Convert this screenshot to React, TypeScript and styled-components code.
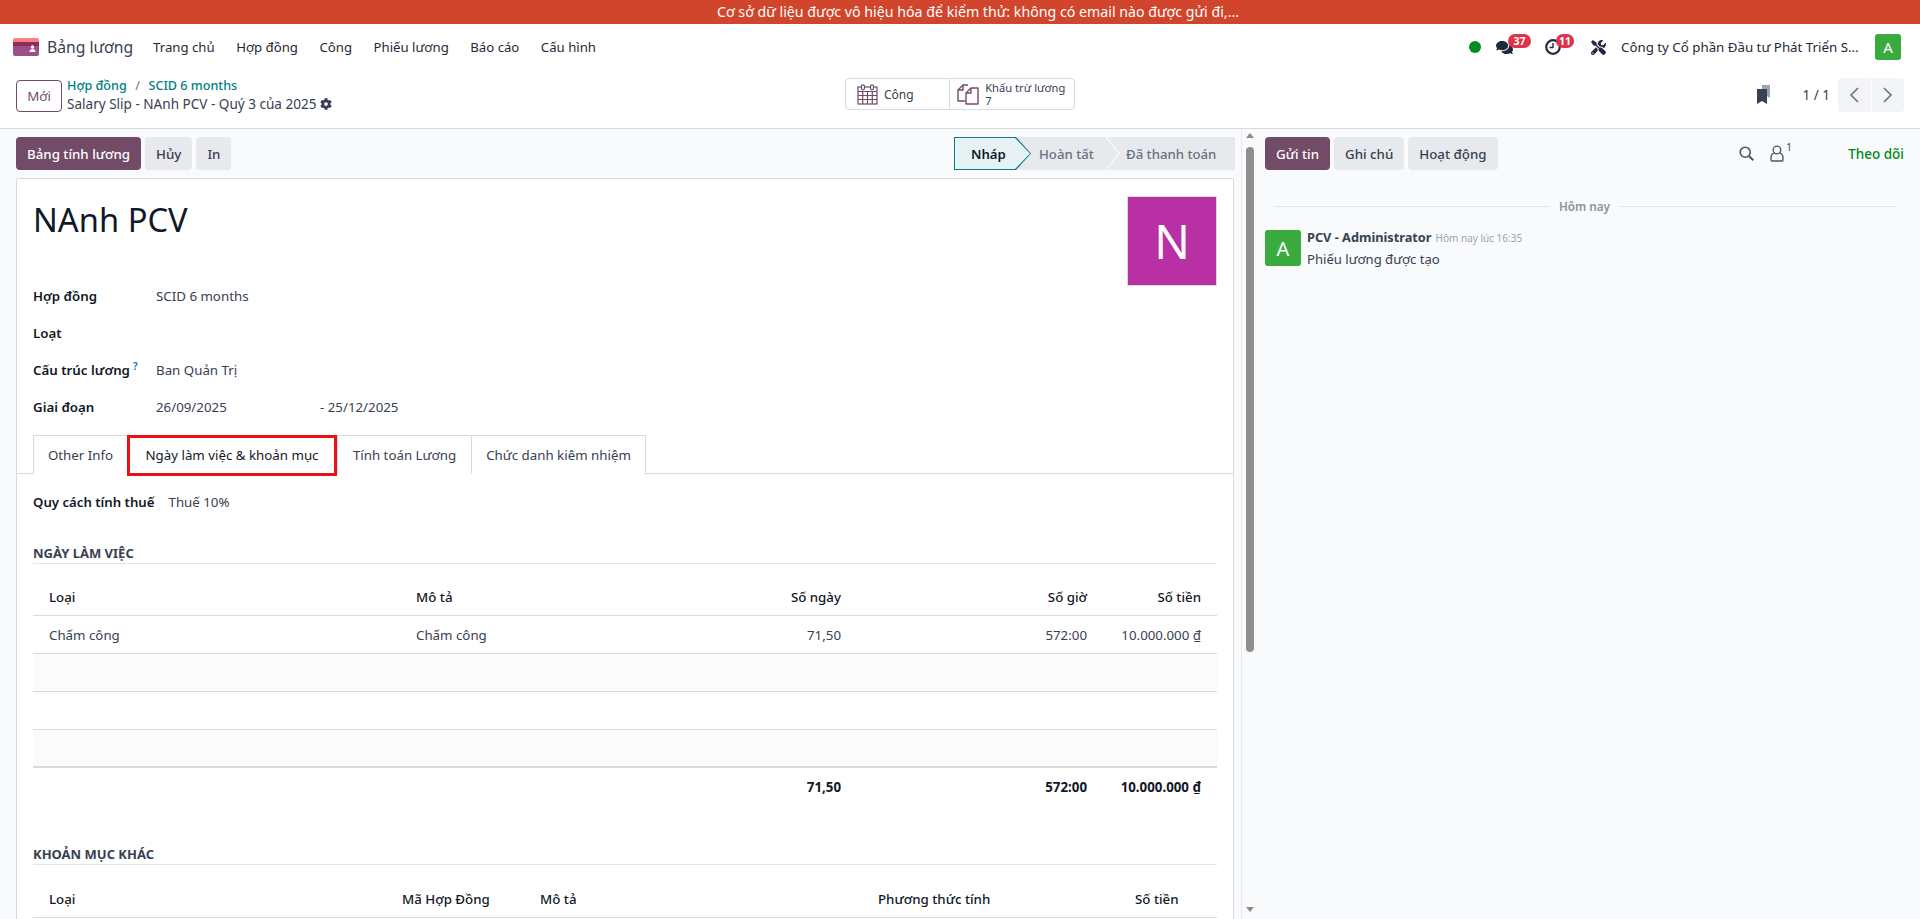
import React from "react";
import styled, { createGlobalStyle } from "styled-components";
import { FaComments, FaTools, FaCog } from "react-icons/fa";

const Global = createGlobalStyle`
  html, body { margin: 0; padding: 0; height: 100%; overflow: hidden; background: #fff; }
  body { font-family: "Noto Sans", "Open Sans", sans-serif; font-size: 13.3px; color: #374151; }
  * { box-sizing: border-box; }
`;

const Page = styled.div`
  width: 1920px; height: 919px; display: flex; flex-direction: column; overflow: hidden;
`;
const Banner = styled.div`
  height: 24px; flex: none; background: #d0452b; color: #fff; font-size: 14.2px; line-height: 24px; text-align: center; padding-left: 36px;
`;
const Navbar = styled.header`
  height: 46px; flex: none; display: flex; align-items: center; padding: 0 19px 0 13px; background: #fff;
`;
const Brand = styled.div`
  display: flex; align-items: center; gap: 8px; font-size: 15.7px; color: #374151; margin-right: 20px;
`;
const Menu = styled.nav`
  display: flex; gap: 21.5px; font-size: 13.2px; color: #1f2937;
`;
const Systray = styled.div`
  margin-left: auto; display: flex; align-items: center; color: #1f2937;
`;
const Dot = styled.span`
  width: 12px; height: 12px; border-radius: 50%; background: #008f1f; margin-right: 15px;
`;
const TrayIcon = styled.span<{ $gap: number }>`
  position: relative; display: flex; margin-right: ${(p) => p.$gap}px; color: #1f2a3c;
`;
const Badge = styled.span<{ $left: number; $w: number }>`
  position: absolute; left: ${(p) => p.$left}px; top: -5px; height: 14px; width: ${(p) => p.$w}px; border-radius: 7px;
  background: #e0334a; color: #fff; font-size: 10.5px; font-weight: 700; line-height: 14px; text-align: center;
`;
const Company = styled.span`
  width: 234px; white-space: nowrap; margin-right: 20px; font-size: 13.3px;
`;
const UserBox = styled.span`
  width: 26px; height: 26px; border-radius: 3px; background: #3aac3f; color: #fff; display: flex; align-items: center; justify-content: center; font-size: 15px;
`;

const ControlPanel = styled.div`
  height: 59px; flex: none; position: relative; display: grid; grid-template-columns: 829px 230px 1fr; padding: 8px 16px 0;
  border-bottom: 1px solid #d8dadd; background: #fff; align-items: start;
`;
const Left = styled.div`
  display: flex; gap: 5px; align-items: center;
`;
const NewButton = styled.button`
  width: 46px; height: 32px; border: 1px solid #714b67; border-radius: 4px; background: #fff; color: #714b67; font: inherit; font-size: 13.3px; padding: 0;
`;
const Crumbs = styled.div`
  display: flex; flex-direction: column; margin-top: -1px;
`;
const CrumbLine = styled.div`
  display: flex; gap: 8.5px; color: #017e84; font-weight: 500; font-size: 12.6px; line-height: 18px;
`;
const CrumbSep = styled.span`
  color: #6b7280; font-weight: 400;
`;
const Title = styled.div`
  display: flex; align-items: center; gap: 4px; color: #374151; line-height: 18px; font-size: 13.55px;
`;
const StatGroup = styled.div`
  height: 32px; display: flex; border: 1px solid #d8dadd; border-radius: 4px; background: #fff;
`;
const Stat = styled.div<{ $w: number }>`
  width: ${(p) => p.$w}px; display: flex; align-items: center; gap: 6px; padding-left: 11px; font-size: 12px; color: #374151;
  & + & { border-left: 1px solid #d8dadd; padding-left: 7px; }
`;
const StatText = styled.div`
  display: flex; flex-direction: column; line-height: 13px; font-size: 11.2px;
`;
const Pager = styled.div`
  display: flex; align-items: center; justify-content: flex-end; height: 34px;
`;
const PagerCount = styled.span`
  font-size: 13.5px; margin: 0 8px 0 32px; color: #374151;
`;
const PagerBtn = styled.button`
  width: 32.5px; height: 34px; border: 0; background: #f3f4f6; padding: 0; display: flex; align-items: center; justify-content: center; color: #6b7280;
  &:first-of-type { border-radius: 4px 0 0 4px; margin-right: 1px; }
  &:last-of-type { border-radius: 0 4px 4px 0; }
`;

const Main = styled.div`
  flex: 1; min-height: 0; display: flex; background: #f9fafb; overflow: hidden;
`;
const FormPane = styled.section`
  width: 1241px; flex: none; padding: 8px 7px 0 16px; overflow: hidden;
`;
const StatusRow = styled.div`
  display: flex; align-items: center; height: 33px; margin-bottom: 8px;
`;
const Btn = styled.button<{ $primary?: boolean }>`
  height: 33px; border: 0; border-radius: 4px; padding: 0 11px; margin-right: 4px; font: inherit; font-size: 13.3px; font-weight: 500;
  background: ${(p) => (p.$primary ? "#714b67" : "#e7e9ed")}; color: ${(p) => (p.$primary ? "#fff" : "#374151")};
`;
const StatusBar = styled.div`
  margin-left: auto; display: flex; height: 33px; background: #e7e9ed; width: 281px; margin-right: -1px; font-size: 13.2px; font-weight: 500; color: #6b7280;
`;
const StepCurrent = styled.div`
  position: relative; width: 77px; margin-right: -6px; background: #017e84; color: #111827; display: flex; align-items: center; padding-left: 17px; font-weight: 600;
  clip-path: polygon(0 0, calc(100% - 15px) 0, 100% 50%, calc(100% - 15px) 100%, 0 100%);
  &::before {
    content: ""; position: absolute; inset: 1px 1px 1px 1px; background: #e6f2f3;
    clip-path: polygon(0 0, calc(100% - 15px) 0, 100% 50%, calc(100% - 15px) 100%, 0 100%);
  }
  span { position: relative; }
`;
const Step = styled.div<{ $w: number; $pad: number }>`
  position: relative; width: ${(p) => p.$w}px; display: flex; align-items: center; padding-left: ${(p) => p.$pad}px;
  &::after {
    content: ""; position: absolute; right: -15px; top: 0; width: 15px; height: 33px; background: #f9fafb;
    clip-path: polygon(0 0, 1.5px 0, 100% 50%, 1.5px 100%, 0 100%, calc(100% - 1.5px) 50%);
  }
`;
const StepLast = styled.div`
  padding-left: 21px; display: flex; align-items: center;
`;
const Sheet = styled.div`
  background: #fff; border: 1px solid #d8dadd; border-bottom: 0; border-radius: 2px 2px 0 0; height: 900px;
`;
const SheetHead = styled.div`
  height: 98px; display: flex; justify-content: space-between; align-items: flex-start; padding: 17px 16px 0;
`;
const Name = styled.h1`
  margin: 0; font-size: 32.7px; font-weight: 400; line-height: 48px; color: #111827;
`;
const Avatar = styled.div`
  width: 90px; height: 90px; background: #b92fa4; border: 1px solid #d8dadd; color: #fff; display: flex; align-items: center; justify-content: center; font-size: 47px;
`;
const Fields = styled.div`
  padding: 0 16px; height: 157px;
`;
const Field = styled.div`
  height: 37px; display: flex; align-items: center;
`;
const Label = styled.label`
  width: 123px; flex: none; font-weight: 600; color: #111827; font-size: 13.3px;
`;
const Help = styled.sup`
  color: #0180a5; font-size: 10px; margin-left: 3px; font-weight: 600;
`;
const Value = styled.span<{ $w?: number }>`
  font-size: 13.3px; color: #374151; ${(p) => (p.$w ? `width: ${p.$w}px;` : "")}
`;
const TabBar = styled.div`
  height: 39px; margin-top: 1px; padding-left: 16px; display: flex; border-bottom: 1px solid #d8dadd;
`;
const Tab = styled.div<{ $w: number; $active?: boolean }>`
  position: relative; width: ${(p) => p.$w}px; height: 39px; display: flex; align-items: center; justify-content: center; font-size: 13.3px;
  border: 1px solid #d8dadd; border-left-width: ${(p) => (p.$active ? 0 : 1)}px; border-bottom: 0; margin-right: -1px;
  color: ${(p) => (p.$active ? "#111827" : "#374151")};
  background: #fff;
  ${(p) => (p.$active ? `&::after { content: ""; position: absolute; left: 0; right: 0; top: -1px; bottom: -2px; border: 3px solid #ee0f16; }` : "")}
`;
const TabBody = styled.div`
  padding: 16px 16px 0;
`;
const TaxRow = styled.div`
  display: flex; height: 24px; align-items: center; gap: 14px;
`;
const TaxLabel = styled.span`
  font-weight: 600; color: #111827; font-size: 13.2px;
`;
const SectionTitle = styled.div<{ $mt: number }>`
  margin-top: ${(p) => p.$mt}px; height: 20px; line-height: 19px; border-bottom: 1px solid #e3e5e8; font-size: 13px; font-weight: 700; color: #374151; text-transform: uppercase;
`;
const Table = styled.table<{ $mt: number }>`
  width: 1184px; margin-top: ${(p) => p.$mt}px; border-collapse: collapse; table-layout: fixed; font-size: 13.3px;
`;
const Col = styled.col<{ $w: number }>`
  width: ${(p) => p.$w}px;
`;
const Th = styled.th<{ $right?: boolean }>`
  height: 36px; padding: 0 16px; font-weight: 500; color: #111827; text-align: ${(p) => (p.$right ? "right" : "left")}; border-bottom: 1px solid #d8dadd; white-space: nowrap;
`;
const Td = styled.td<{ $right?: boolean }>`
  height: 38px; padding: 1px 16px 0; color: #374151; text-align: ${(p) => (p.$right ? "right" : "left")}; border-bottom: 1px solid #d8dadd; white-space: nowrap;
`;
const Tr = styled.tr<{ $striped?: boolean; $last?: boolean }>`
  background: ${(p) => (p.$striped ? "#fbfbfb" : "#fff")};
  td { ${(p) => (p.$last ? "border-bottom: 2px solid #d8dadd;" : "")} }
`;
const Foot = styled.td`
  height: 39px; padding: 0 16px; font-weight: 700; color: #111827; text-align: right; white-space: nowrap;
`;
const ScrollTrack = styled.div`
  width: 16px; flex: none; border-left: 1px solid #e7e9ed; display: flex; flex-direction: column; align-items: center; background: #f9fafb; padding-top: 4px; height: 100%;
`;
const ArrowUp = styled.span`
  width: 0; height: 0; border-left: 4px solid transparent; border-right: 4px solid transparent; border-bottom: 5px solid #8a8a8a;
`;
const ArrowDown = styled.span`
  width: 0; height: 0; border-left: 4px solid transparent; border-right: 4px solid transparent; border-top: 5px solid #8a8a8a; margin-top: auto; margin-bottom: 7px;
`;
const Thumb = styled.div`
  width: 8px; height: 505px; margin-top: 9px; background: #8f8f8f; border-radius: 4px;
`;
const Chatter = styled.aside`
  flex: 1; padding: 8px 16px 0 8px; background: #f9fafb;
`;
const ChatterBar = styled.div`
  display: flex; align-items: center; height: 33px;
`;
const ChatterTools = styled.div`
  margin-left: auto; display: flex; align-items: center; color: #4b5563;
`;
const Followers = styled.span`
  position: relative; display: flex; margin: 0 63px 0 16px;
`;
const FollowerCount = styled.sup`
  position: absolute; left: 16px; top: -4px; font-size: 10px; line-height: 12px; color: #374151;
`;
const Follow = styled.span`
  color: #008818; font-weight: 500; font-size: 13.5px; margin-left: 1px;
`;
const DayLine = styled.div`
  display: flex; align-items: center; gap: 9px; margin: 28px 9px 0; color: #8a929c; font-size: 11.7px; font-weight: 600;
  &::before, &::after { content: ""; flex: 1; height: 1px; background: #e3e5e8; }
`;
const Message = styled.div`
  display: flex; gap: 6px; margin-top: 16px;
`;
const MsgAvatar = styled.div`
  width: 36px; height: 36px; border-radius: 3px; background: #3aac3f; color: #fff; display: flex; align-items: center; justify-content: center; font-size: 20px;
`;
const MsgBody = styled.div`
  display: flex; flex-direction: column; gap: 3px; margin-top: -2px;
`;
const MsgHead = styled.div`
  display: flex; align-items: baseline; gap: 4px; line-height: 18px;
`;
const Author = styled.span`
  font-weight: 700; font-size: 12.75px; color: #374151;
`;
const MsgDate = styled.span`
  font-size: 10px; color: #9ca3af;
`;
const MsgText = styled.div`
  font-size: 13.1px; color: #374151; line-height: 18px;
`;

const Logo = () => (
  <svg width="26" height="18" viewBox="0 0 26 18">
    <path d="M0 2a2 2 0 0 1 2-2h22a2 2 0 0 1 2 2v2H0z" fill="#fb7f87" />
    <rect y="4" width="26" height="4" fill="#8f2d57" />
    <path d="M0 8h26v8a2 2 0 0 1-2 2H2a2 2 0 0 1-2-2z" fill="#9c5089" />
    <circle cx="19.5" cy="9" r="1.7" fill="#fff" />
    <path d="M16.5 14c0-2 1.3-3 3-3s3 1 3 3z" fill="#fff" />
  </svg>
);
const ClockIcon = () => (
  <svg width="16" height="16" viewBox="0 0 16 16" fill="none" stroke="currentColor">
    <circle cx="8" cy="8" r="6.8" strokeWidth="2.2" />
    <path d="M8 4v4.500H4.500" strokeWidth="1.4" />
  </svg>
);
const SearchIcon = () => (
  <svg width="15" height="15" viewBox="0 0 15 15" fill="none" stroke="#4b5563" strokeWidth="1.6">
    <circle cx="6.2" cy="6.2" r="5" />
    <path d="M10 10l4.200 4.200" strokeWidth="2" />
  </svg>
);
const CalendarIcon = () => (
  <svg width="21" height="21" viewBox="0 0 21 21" fill="none" stroke="#714b67" strokeWidth="1.2">
    <rect x="1" y="3" width="19" height="17" fill="none" />
    <path d="M1 7.500h19M1 11.500h19M1 15.500h19M5.700 7.500V20M10.500 7.500V20M15.300 7.500V20" />
    <rect x="4.500" y="0.800" width="3" height="5" rx="1.500" fill="#fff" />
    <rect x="13.500" y="0.800" width="3" height="5" rx="1.500" fill="#fff" />
  </svg>
);
const FilesIcon = () => (
  <svg width="22" height="21" viewBox="0 0 22 21" fill="none" stroke="#714b67" strokeWidth="1.4" strokeLinejoin="round">
    <path d="M11 1H6L1 6v11h7" />
    <path d="M6 1v5H1" />
    <path d="M21 4h-7l-5 5v11h12z" fill="#fff" />
    <path d="M14 4v5H9" />
  </svg>
);
const Bookmarks = () => (
  <svg width="14" height="20" viewBox="0 0 14 20">
    <path d="M5 0h8v13l-3-2H5z" fill="#9ca3af" />
    <path d="M0 4h10v15l-5-3-5 3z" fill="#374151" />
  </svg>
);
const Chevron = ({ dir }: { dir: "l" | "r" }) => (
  <svg width="12" height="18" viewBox="0 0 12 18" fill="none" stroke="currentColor" strokeWidth="1.6">
    <path d={dir === "l" ? "M10 2 3 9l7 7" : "M2 2l7 7-7 7"} />
  </svg>
);
const UserOutline = () => (
  <svg width="14" height="17" viewBox="0 0 14 17" fill="none" stroke="#4b5563" strokeWidth="1.3">
    <circle cx="7" cy="5" r="3.8" />
    <path d="M4 8c-2 .8-3 2.500-3 4.500V15a1 1 0 0 0 1 1h10a1 1 0 0 0 1-1v-2.500C13 10.500 12 8.800 10 8" />
  </svg>
);

const dong = "10.000.000 ₫";

export default function App() {
  return (
    <Page>
      <Global />
      <Banner>Cơ sở dữ liệu được vô hiệu hóa để kiểm thử: không có email nào được gửi đi,...</Banner>
      <Navbar>
        <Brand><Logo />Bảng lương</Brand>
        <Menu>
          <span>Trang chủ</span><span>Hợp đồng</span><span>Công</span><span>Phiếu lương</span><span>Báo cáo</span><span>Cấu hình</span>
        </Menu>
        <Systray>
          <Dot />
          <TrayIcon $gap={32}><FaComments size={17} /><Badge $left={12} $w={23}>37</Badge></TrayIcon>
          <TrayIcon $gap={30}><ClockIcon /><Badge $left={11} $w={18}>11</Badge></TrayIcon>
          <TrayIcon $gap={15}><FaTools size={15} /></TrayIcon>
          <Company>Công ty Cổ phần Đầu tư Phát Triển S...</Company>
          <UserBox>A</UserBox>
        </Systray>
      </Navbar>
      <ControlPanel>
        <Left>
          <NewButton>Mới</NewButton>
          <Crumbs>
            <CrumbLine><span>Hợp đồng</span><CrumbSep>/</CrumbSep><span>SCID 6 months</span></CrumbLine>
            <Title>Salary Slip - NAnh PCV - Quý 3 của 2025 <FaCog size={12} color="#374151" /></Title>
          </Crumbs>
        </Left>
        <StatGroup>
          <Stat $w={104}><CalendarIcon />Công</Stat>
          <Stat $w={126}><FilesIcon /><StatText><span>Khấu trừ lương</span><span>7</span></StatText></Stat>
        </StatGroup>
        <Pager>
          <Bookmarks />
          <PagerCount>1 / 1</PagerCount>
          <PagerBtn><Chevron dir="l" /></PagerBtn>
          <PagerBtn><Chevron dir="r" /></PagerBtn>
        </Pager>
      </ControlPanel>
      <Main>
        <FormPane>
          <StatusRow>
            <Btn $primary>Bảng tính lương</Btn>
            <Btn>Hủy</Btn>
            <Btn>In</Btn>
            <StatusBar>
              <StepCurrent><span>Nháp</span></StepCurrent>
              <Step $w={80} $pad={14}>Hoàn tất</Step>
              <StepLast>Đã thanh toán</StepLast>
            </StatusBar>
          </StatusRow>
          <Sheet>
            <SheetHead>
              <Name>NAnh PCV</Name>
              <Avatar>N</Avatar>
            </SheetHead>
            <Fields>
              <Field><Label>Hợp đồng</Label><Value>SCID 6 months</Value></Field>
              <Field><Label>Loạt</Label></Field>
              <Field><Label>Cấu trúc lương<Help>?</Help></Label><Value>Ban Quản Trị</Value></Field>
              <Field><Label>Giai đoạn</Label><Value $w={164}>26/09/2025</Value><Value>- 25/12/2025</Value></Field>
            </Fields>
            <TabBar>
              <Tab $w={95}>Other Info</Tab>
              <Tab $w={211} $active>Ngày làm việc &amp; khoản mục</Tab>
              <Tab $w={135}>Tính toán Lương</Tab>
              <Tab $w={175}>Chức danh kiêm nhiệm</Tab>
            </TabBar>
            <TabBody>
              <TaxRow><TaxLabel>Quy cách tính thuế</TaxLabel><Value>Thuế 10%</Value></TaxRow>
              <SectionTitle $mt={30}>Ngày làm việc</SectionTitle>
              <Table $mt={15}>
                <colgroup><Col $w={367} /><Col $w={300} /><Col $w={157} /><Col $w={246} /><Col $w={114} /></colgroup>
                <thead><tr><Th>Loại</Th><Th>Mô tả</Th><Th $right>Số ngày</Th><Th $right>Số giờ</Th><Th $right>Số tiền</Th></tr></thead>
                <tbody>
                  <Tr><Td>Chấm công</Td><Td>Chấm công</Td><Td $right>71,50</Td><Td $right>572:00</Td><Td $right>{dong}</Td></Tr>
                  <Tr $striped><Td colSpan={5} /></Tr>
                  <Tr><Td colSpan={5} /></Tr>
                  <Tr $striped $last><Td colSpan={5} /></Tr>
                </tbody>
                <tfoot><tr><Foot colSpan={2} /><Foot>71,50</Foot><Foot>572:00</Foot><Foot>{dong}</Foot></tr></tfoot>
              </Table>
              <SectionTitle $mt={39}>Khoản mục khác</SectionTitle>
              <Table $mt={16}>
                <colgroup><Col $w={353} /><Col $w={138} /><Col $w={338} /><Col $w={257} /><Col $w={98} /></colgroup>
                <thead><tr><Th>Loại</Th><Th>Mã Hợp Đồng</Th><Th>Mô tả</Th><Th>Phương thức tính</Th><Th>Số tiền</Th></tr></thead>
              </Table>
            </TabBody>
          </Sheet>
        </FormPane>
        <ScrollTrack>
          <ArrowUp />
          <Thumb />
          <ArrowDown />
        </ScrollTrack>
        <Chatter>
          <ChatterBar>
            <Btn $primary>Gửi tin</Btn>
            <Btn>Ghi chú</Btn>
            <Btn>Hoạt động</Btn>
            <ChatterTools>
              <SearchIcon />
              <Followers><UserOutline /><FollowerCount>1</FollowerCount></Followers>
              <Follow>Theo dõi</Follow>
            </ChatterTools>
          </ChatterBar>
          <DayLine>Hôm nay</DayLine>
          <Message>
            <MsgAvatar>A</MsgAvatar>
            <MsgBody>
              <MsgHead><Author>PCV - Administrator</Author><MsgDate>Hôm nay lúc 16:35</MsgDate></MsgHead>
              <MsgText>Phiếu lương được tạo</MsgText>
            </MsgBody>
          </Message>
        </Chatter>
      </Main>
    </Page>
  );
}
